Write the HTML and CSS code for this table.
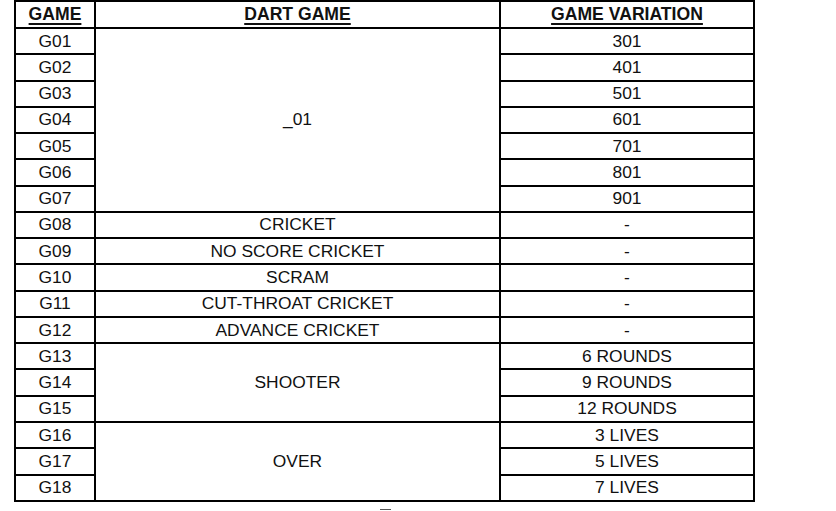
FILE: index.html
```html
<!DOCTYPE html>
<html>
<head>
<meta charset="utf-8">
<link rel="stylesheet" href="styles.css">
</head>
<body>
<table class="games">
<colgroup><col class="c1"><col class="c2"><col class="c3"></colgroup>
<thead>
<tr class="head"><th>GAME</th><th>DART GAME</th><th>GAME VARIATION</th></tr>
</thead>
<tbody>
<tr><td>G01</td><td rowspan="7">_01</td><td>301</td></tr>
<tr><td>G02</td><td>401</td></tr>
<tr><td>G03</td><td>501</td></tr>
<tr><td>G04</td><td>601</td></tr>
<tr><td>G05</td><td>701</td></tr>
<tr><td>G06</td><td>801</td></tr>
<tr><td>G07</td><td>901</td></tr>
<tr><td>G08</td><td>CRICKET</td><td>-</td></tr>
<tr><td>G09</td><td>NO SCORE CRICKET</td><td>-</td></tr>
<tr><td>G10</td><td>SCRAM</td><td>-</td></tr>
<tr><td>G11</td><td>CUT-THROAT CRICKET</td><td>-</td></tr>
<tr><td>G12</td><td>ADVANCE CRICKET</td><td>-</td></tr>
<tr><td>G13</td><td rowspan="3">SHOOTER</td><td>6 ROUNDS</td></tr>
<tr><td>G14</td><td>9 ROUNDS</td></tr>
<tr><td>G15</td><td>12 ROUNDS</td></tr>
<tr><td>G16</td><td rowspan="3">OVER</td><td>3 LIVES</td></tr>
<tr><td>G17</td><td>5 LIVES</td></tr>
<tr><td>G18</td><td>7 LIVES</td></tr>
</tbody>
</table>
<div class="next"></div>
</body>
</html>
```
FILE: styles.css
```css
html, body {
  margin: 0;
  padding: 0;
  background: #fff;
}
body {
  font-family: "Liberation Sans", Arial, sans-serif;
  color: #111;
  font-size: 17.4px;
}
.games {
  margin-left: 14px;
  border-collapse: separate;
  border-spacing: 0;
  table-layout: fixed;
  width: 741px;
  border-left: 2px solid #000;
  border-top: 2px solid #000;
}
.c1 { width: 80px; }
.c2 { width: 405px; }
.c3 { width: 254px; }
.games th,
.games td {
  border-right: 2px solid #000;
  border-bottom: 2px solid #000;
  padding: 0;
  text-align: center;
  vertical-align: middle;
  line-height: 19px;
  box-sizing: border-box;
}
.games th {
  font-size: 17.6px;
  font-weight: bold;
  text-decoration: underline;
  text-decoration-thickness: 2px;
  text-underline-offset: 3px;
  height: 27px;
}
.games tbody tr {
  height: 26.28px;
}
.next {
  margin: 7px 0 0 380px;
  width: 11px;
  height: 1px;
  background: #555;
}
```
